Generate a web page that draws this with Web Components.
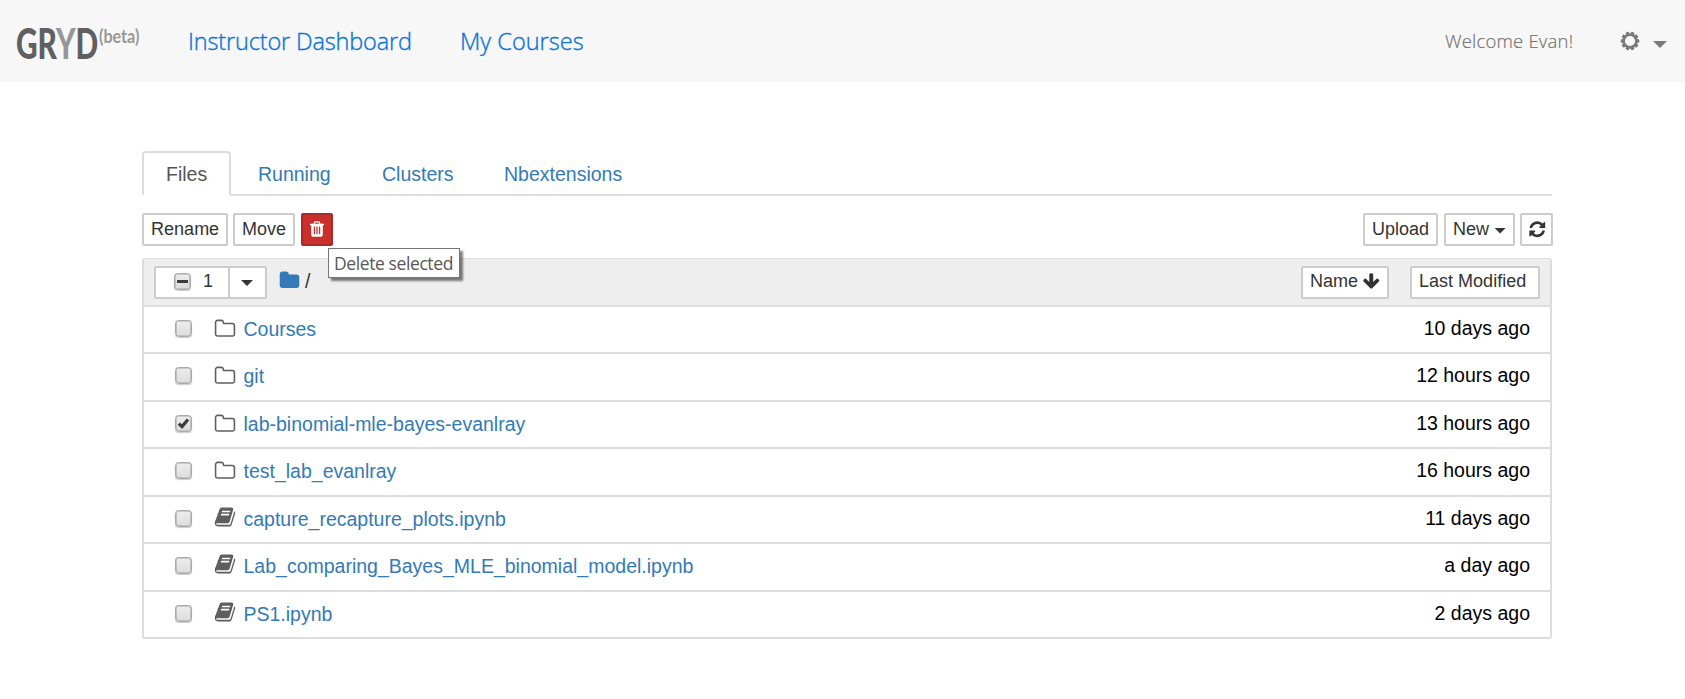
<!DOCTYPE html>
<html lang="en">
<head>
<meta charset="utf-8">
<title>GRYD</title>
<style>
body{margin:0;background:#fff;font-family:"Liberation Sans",Arial,sans-serif}
</style>
</head>
<body>
<gryd-app></gryd-app>
<script>
const ICONS={
trash:'M704 1376v-704q0-14-9-23t-23-9h-64q-14 0-23 9t-9 23v704q0 14 9 23t23 9h64q14 0 23-9t9-23zm256 0v-704q0-14-9-23t-23-9h-64q-14 0-23 9t-9 23v704q0 14 9 23t23 9h64q14 0 23-9t9-23zm256 0v-704q0-14-9-23t-23-9h-64q-14 0-23 9t-9 23v704q0 14 9 23t23 9h64q14 0 23-9t9-23zm-544-992h448l-48-117q-7-9-17-11h-317q-10 2-17 11zm928 32v64q0 14-9 23t-23 9h-96v948q0 83-47 143.5t-113 60.5h-832q-66 0-113-58.5t-47-141.5v-952h-96q-14 0-23-9t-9-23v-64q0-14 9-23t23-9h309l70-167q15-37 54-63t79-26h320q40 0 79 26t54 63l70 167h309q14 0 23 9t9 23z',
refresh:'M1639 1056q0 5-1 7-64 268-268 434.5t-478 166.5q-146 0-282.5-55t-243.5-157l-129 129q-19 19-45 19t-45-19-19-45v-448q0-26 19-45t45-19h448q26 0 45 19t19 45-19 45l-137 137q71 66 161 102t187 36q134 0 250-65t186-179q11-17 53-117 8-23 30-23h192q13 0 22.5 9.5t9.5 22.5zm25-800v448q0 26-19 45t-45 19h-448q-26 0-45-19t-19-45 19-45l138-138q-148-137-349-137-134 0-250 65t-186 179q-11 17-53 117-8 23-30 23h-199q-13 0-22.5-9.5t-9.5-22.5v-7q65-268 270-434.5t480-166.5q146 0 284 55.5t245 156.5l130-129q19-19 45-19t45 19 19 45z',
down:'M1675 832q0 53-37 90l-651 652q-39 37-91 37-53 0-90-37l-651-652q-38-36-38-90 0-53 38-91l74-75q39-37 91-37 53 0 90 37l294 294v-704q0-52 38-90t90-38h128q52 0 90 38t38 90v704l294-294q37-37 90-37 52 0 91 37l75 75q37 39 37 91z',
folder:'M1728 608v704q0 92-66 158t-158 66h-1216q-92 0-158-66t-66-158v-960q0-92 66-158t158-66h320q92 0 158 66t66 158v32h672q92 0 158 66t66 158z',
'folder-o':'M1600 1312v-704q0-40-28-68t-68-28h-704q-40 0-68-28t-28-68v-64q0-40-28-68t-68-28h-320q-40 0-68 28t-28 68v960q0 40 28 68t68 28h1216q40 0 68-28t28-68zm128-704v704q0 92-66 158t-158 66h-1216q-92 0-158-66t-66-158v-960q0-92 66-158t158-66h320q92 0 158 66t66 158v32h672q92 0 158 66t66 158z',
book:'M1703 478q40 57 18 129l-275 906q-19 64-76.5 107.5t-122.5 43.5h-923q-77 0-148.5-53.5t-99.5-131.5q-24-67-2-127 0-4 3-27t4-37q1-8-3-21.5t-3-19.5q2-11 8-21t16.5-23.5 16.5-23.5q23-38 45-91.5t30-91.5q3-10 .5-30t-.5-28q3-11 17-28t17-23q21-36 42-92t25-90q1-9-2.5-32t.5-28q4-13 22-30.5t22-22.5q19-26 42.5-84.5t27.5-96.5q1-8-3-25.5t-2-26.5q2-8 9-18t18-23 17-21q8-12 16.5-30.5t15-35 16-36 19.5-32 26.5-23.5 36-11.5 47.5 5.5l-1 3q38-9 51-9h761q74 0 114 56t18 130l-274 906q-36 119-71.5 153.5t-128.5 34.5h-869q-27 0-38 15-11 16-1 43 24 70 144 70h923q29 0 56-15.5t35-41.5l300-987q7-22 5-57 38 15 59 43zm-1064 2q-4 13 2 22.5t20 9.5h608q13 0 25.5-9.5t16.5-22.5l21-64q4-13-2-22.5t-20-9.5h-608q-13 0-25.5 9.5t-16.5 22.5zm-83 256q-4 13 2 22.5t20 9.5h608q13 0 25.5-9.5t16.5-22.5l21-64q4-13-2-22.5t-20-9.5h-608q-13 0-25.5 9.5t-16.5 22.5z'
};
function define(name,render){
  customElements.define(name,class extends HTMLElement{
    constructor(){super();this.attachShadow({mode:'open'})}
    connectedCallback(){this.shadowRoot.innerHTML=render(this)}
  });
}
define('fa-icon',el=>`<style>:host{display:block;flex:none;width:21px;height:21px}svg{display:block;width:100%;height:100%;fill:currentColor}</style>
<svg viewBox="0 0 1792 1792"><path d="${ICONS[el.getAttribute('name')]}"/></svg>`);

define('caret-down',()=>`<style>:host{display:block;flex:none;width:12px;height:6px;background:currentColor;clip-path:polygon(0 0,100% 0,50% 100%)}</style>`);

define('check-box',el=>{
  const s=el.getAttribute('state');
  const mark=s==='checked'?'<path d="M3.8 8.6 7 11.6 13 4.4" fill="none" stroke="#3c3c3c" stroke-width="3.2"/>':s==='mixed'?'<path d="M3 8.5h11" stroke="#3c3c3c" stroke-width="3"/>':'';
  return `<style>:host{display:block;flex:none;width:17px;height:17px}div{box-sizing:border-box;width:17px;height:17px;border:1px solid #a9a9a9;border-radius:3.5px;background:linear-gradient(#ededed,#dcdcdc);box-shadow:0 1px 1px #0003,inset 0 0 0 .6px #a9a9a9}svg{display:block;width:17px;height:17px;margin:-1px}</style><div><svg viewBox="0 0 17 17">${mark}</svg></div>`;
});

define('nb-button',()=>`<style>
:host{display:flex;align-items:center;box-sizing:border-box;height:33px;border:2px solid #ccc;border-radius:2px;background:#fff;color:#333;font-size:18px;line-height:27px;padding:0 0 0 7.1px;white-space:nowrap;flex:none}
:host([danger]){background:#c9302c;border-color:#ac2925;color:#fff}
</style><slot></slot>`);

define('gryd-logo',()=>`<style>:host{display:flex;width:126px;height:40px;flex:none;font-family:Lato,sans-serif;font-weight:900;color:#606060}
div{width:82px;flex:none}
.n,.b{display:block;width:max-content;transform-origin:0 0;white-space:nowrap}
.n{font-size:42px;line-height:40px;transform:scaleX(.71);margin-left:-1px}
.n i{font-style:normal;color:#979797}
.b{font-size:18.5px;line-height:22px;color:#979797;transform:scaleX(.87);margin-top:2px;font-weight:700}
</style><div><span class="n">GR<i>Y</i>D</span></div><span class="b">(beta)</span>`);

define('gear-icon',()=>{
  let t='';for(let i=0;i<10;i++)t+=`<rect x="-1.7" y="-9.3" width="3.4" height="3.6" rx=".6" transform="rotate(${18+i*36})"/>`;
  return `<style>:host{display:block;width:20px;height:20px;flex:none}svg{display:block;fill:currentColor}</style><svg width="20" height="20" viewBox="-10 -10 20 20">${t}<circle r="6.4" fill="none" stroke="currentColor" stroke-width="2.6"/></svg>`;
});

define('site-header',()=>`<style>
:host{display:flex;box-sizing:border-box;height:82px;background:#f7f7f7;padding:0 18px 0 17px;font-family:"Open Sans","Noto Sans",sans-serif}
gryd-logo{margin-top:23px}
nav{display:flex;margin-left:45px;gap:50px}
a{color:#0b73d9;font-size:23.5px;line-height:32px;margin-top:25px;white-space:nowrap;font-weight:300;-webkit-text-stroke:.35px #0b73d9}
a:first-child{letter-spacing:-.15px;width:222px}a:last-child{letter-spacing:.03px}
.w{margin-left:auto;font-size:18.5px;font-weight:300;line-height:26px;letter-spacing:.2px;margin-top:28px;color:#6f6f6f;-webkit-text-stroke:.15px #6f6f6f;width:129px;margin-right:46px;white-space:nowrap}
gear-icon{margin-top:31px;color:#7a7a7a}
caret-down{width:14px;height:7px;margin:41px 0 0 13px;color:#7a7a7a}
</style><gryd-logo></gryd-logo><nav><a>Instructor Dashboard</a><a>My Courses</a></nav><span class="w">Welcome Evan!</span><gear-icon></gear-icon><caret-down></caret-down>`);

define('nb-tabs',()=>`<style>
:host{display:flex;box-sizing:border-box;height:45px;border-bottom:2px solid #ddd;font-size:19.5px;line-height:28px;color:#337ab7}
span{box-sizing:border-box;height:43px;padding-top:9px;white-space:nowrap}
.on{width:89px;height:45px;border:2px solid #ddd;border-bottom-color:#fff;border-radius:4px 4px 0 0;background:#fff;color:#555;padding:7px 0 0 22px}
.r{margin-left:27px;width:124px}.c{width:122px}
</style><span class="on">Files</span><span class="r">Running</span><span class="c">Clusters</span><span>Nbextensions</span>`);

define('nb-toolbar',()=>`<style>
:host{display:flex;height:33px}
.rn{width:86px}.mv{width:62px;margin-left:5px}.del{width:32px;margin-left:6px}
.up{width:75px;margin-left:auto}.nw{width:71px;margin-left:6px}.rf{width:33px;margin-left:5px}
.wrap{position:relative}
hint-bubble{position:absolute;left:33px;top:35px;z-index:2}
.del fa-icon{width:18px;height:18px;margin:-1px 0 0 -2.6px}
.rf fa-icon{width:18.5px;height:18.5px;margin:-1px 0 0 -1.6px}
caret-down{margin:2px 0 0 5px}
</style><nb-button class="rn">Rename</nb-button><nb-button class="mv">Move</nb-button><div class="wrap"><nb-button class="del" danger><fa-icon name="trash"></fa-icon></nb-button><hint-bubble>Delete selected</hint-bubble></div>
<nb-button class="up">Upload</nb-button><nb-button class="nw">New<caret-down></caret-down></nb-button><nb-button class="rf"><fa-icon name="refresh"></fa-icon></nb-button>`);

define('hint-bubble',()=>`<style>:host{display:block;box-sizing:border-box;width:132px;height:30px;border:1px solid #767676;background:#fff;box-shadow:3px 3px 2px #00000080;color:#575757;font:17.5px/29px "Open Sans","Noto Sans",sans-serif;letter-spacing:-.4px;padding-left:5px;white-space:nowrap}</style><slot></slot>`);

define('list-header',()=>`<style>
:host{display:flex;box-sizing:border-box;height:48px;background:#eee;border-bottom:2px solid #ddd;padding:7px 10px 0 10px}
nb-button{padding-bottom:2px}
.sel{width:76px;padding-left:18px;border-radius:2px 0 0 2px}
.sel span{margin-left:12px}
.dd{width:39px;margin-left:-2px;border-radius:0 2px 2px 0;padding-left:11px}
.dd caret-down{margin-top:3px}
.home{margin:4px 0 0 12px;color:#337ab7}
.sl{font-size:19.5px;line-height:28px;color:#333;margin:1px 0 0 5px}
.nm{width:88px;margin-left:auto}.nm fa-icon{width:18.5px;height:18.5px;margin:0 0 0 4px}
.lm{width:130px;margin-left:21px}
</style><nb-button class="sel"><check-box state="mixed"></check-box><span>1</span></nb-button><nb-button class="dd"><caret-down></caret-down></nb-button><fa-icon class="home" name="folder"></fa-icon><span class="sl">/</span>
<nb-button class="nm">Name<fa-icon name="down"></fa-icon></nb-button><nb-button class="lm">Last Modified</nb-button>`);

define('file-row',el=>`<style>
:host{display:flex;box-sizing:border-box;border-bottom:2px solid #ddd;font-size:19.5px;line-height:28px;padding:0 20px 0 31px;color:#000}
:host(:last-child){border-bottom:0}
check-box{margin-top:13px}
fa-icon{width:22px;height:22px;color:#5e5e5e;margin:${el.getAttribute('icon')==='book'?'9px':'11px'} 8px 0 21.5px}
a{color:#337ab7;margin-top:8px;white-space:nowrap}
time{margin:7px 0 0 auto;white-space:nowrap}
</style><check-box state="${el.getAttribute('state')||''}"></check-box><fa-icon name="${el.getAttribute('icon')}"></fa-icon><a><slot></slot></a><time>${el.getAttribute('when')}</time>`);

define('file-list',()=>`<style>
:host{display:block;box-sizing:border-box;width:1410px;border:2px solid #ddd;border-top-width:1px;border-radius:3px}
file-row{height:47px}
file-row:nth-of-type(even){height:48px}
file-row:last-child{height:45px}
</style><list-header></list-header>
<file-row icon="folder-o" when="10 days ago">Courses</file-row>
<file-row icon="folder-o" when="12 hours ago">git</file-row>
<file-row icon="folder-o" state="checked" when="13 hours ago">lab-binomial-mle-bayes-evanlray</file-row>
<file-row icon="folder-o" when="16 hours ago">test_lab_evanlray</file-row>
<file-row icon="book" when="11 days ago">capture_recapture_plots.ipynb</file-row>
<file-row icon="book" when="a day ago">Lab_comparing_Bayes_MLE_binomial_model.ipynb</file-row>
<file-row icon="book" when="2 days ago">PS1.ipynb</file-row>`);

define('gryd-app',()=>`<style>
:host{display:block}
main{width:1411px;margin:69px 0 0 142px}
nb-tabs{width:1410px}nb-toolbar{margin:17px 0 12px}
</style><site-header></site-header><main><nb-tabs></nb-tabs><nb-toolbar></nb-toolbar><file-list></file-list></main>`);
</script>
</body>
</html>
